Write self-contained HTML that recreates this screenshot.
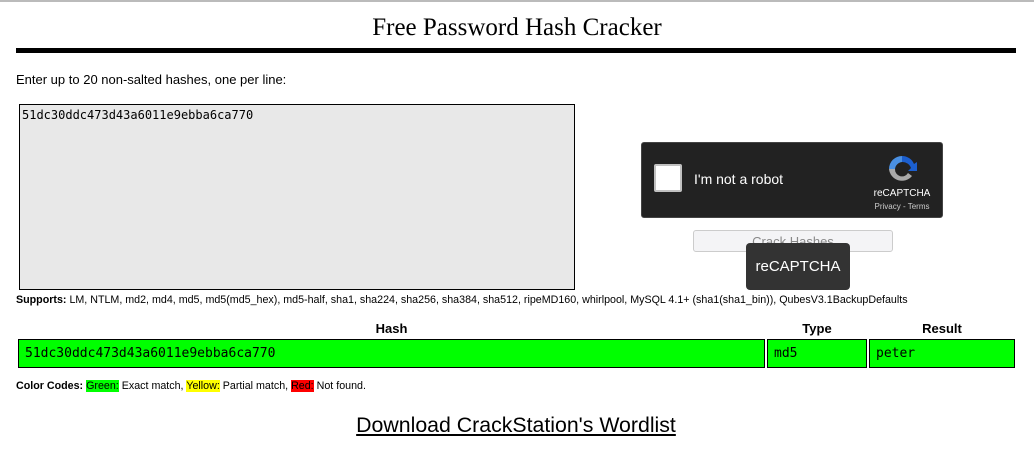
<!DOCTYPE html>
<html><head><style>
body{margin:0;width:1034px;height:452px;background:#fff;font-family:"Liberation Sans",sans-serif;position:relative;overflow:hidden}
.a{position:absolute}
.mono{font-family:"DejaVu Sans Mono","Liberation Mono",monospace}
.cell{position:absolute;background:#0f0;border:1px solid #000;top:339px;height:29px;box-sizing:border-box;font-size:13px;line-height:27px;padding-left:6px}
</style></head><body>
<div class="a" style="left:0;top:0;width:1034px;height:2px;background:#bbb"></div>
<div class="a" style="left:0;width:1034px;top:14px;text-align:center;font-family:'Liberation Serif',serif;font-size:25px">Free Password Hash Cracker</div>
<div class="a" style="left:16px;width:1000px;top:48px;height:5px;background:#000"></div>
<div class="a" style="left:16px;top:72px;font-size:13px">Enter up to 20 non-salted hashes, one per line:</div>
<div class="a mono" style="left:19px;top:104px;width:556px;height:186px;box-sizing:border-box;border:1px solid #000;background:#e8e8e8;font-size:12px;padding:3px 2px">51dc30ddc473d43a6011e9ebba6ca770</div>
<div class="a" style="left:641px;top:142px;width:302px;height:76px;background:#222;border:1px solid #444;border-radius:3px;box-sizing:border-box"></div>
<div class="a" style="left:654px;top:164px;width:28px;height:28px;background:#fff;border:2px solid #c1c1c1;box-sizing:border-box;border-radius:2px"></div>
<div class="a" style="left:694px;top:171px;color:#fff;font-size:14px">I'm not a robot</div>
<svg class="a" style="left:886px;top:153px" width="32" height="32" viewBox="0 0 32 32"><path d="M16 3a13 13 0 0 1 12 8l3-2v9h-9l3-3a9 9 0 0 0-9-6z" fill="#1c5fcf"/><path d="M3 16A13 13 0 0 1 16 3v6a8 8 0 0 0-7 7z" fill="#4a90e2"/><path d="M3 16h6a7 7 0 0 0 13 4l4 3A13 13 0 0 1 3 16z" fill="#aaa"/></svg>
<div class="a" style="left:870px;top:188px;width:64px;text-align:center;color:#fff;font-size:10px">reCAPTCHA</div>
<div class="a" style="left:870px;top:202px;width:64px;text-align:center;color:#ccc;font-size:8px">Privacy - Terms</div>
<div class="a" style="left:693px;top:230px;width:200px;height:22px;border:1px solid #ccc;border-radius:3px;background:#f4f4f6;box-sizing:border-box;text-align:center;color:#888;font-size:13px;line-height:22px">Crack Hashes</div>
<div class="a" style="left:746px;top:243px;width:104px;height:47px;background:#333;border-radius:4px;color:#fff;font-size:15px;text-align:center;line-height:47px">reCAPTCHA</div>
<div class="a" style="left:16px;top:294px;font-size:10.7px"><b>Supports:</b> LM, NTLM, md2, md4, md5, md5(md5_hex), md5-half, sha1, sha224, sha256, sha384, sha512, ripeMD160, whirlpool, MySQL 4.1+ (sha1(sha1_bin)), QubesV3.1BackupDefaults</div>
<div class="a" style="left:18px;width:747px;top:321px;text-align:center;font-weight:bold;font-size:13px">Hash</div>
<div class="a" style="left:767px;width:100px;top:321px;text-align:center;font-weight:bold;font-size:13px">Type</div>
<div class="a" style="left:869px;width:146px;top:321px;text-align:center;font-weight:bold;font-size:13px">Result</div>
<div class="cell mono" style="left:18px;width:747px">51dc30ddc473d43a6011e9ebba6ca770</div>
<div class="cell mono" style="left:767px;width:100px">md5</div>
<div class="cell mono" style="left:869px;width:146px">peter</div>
<div class="a" style="left:16px;top:380px;font-size:10.7px"><b>Color Codes:</b> <span style="background:#0f0">Green:</span> Exact match, <span style="background:#ff0">Yellow:</span> Partial match, <span style="background:#f00">Red:</span> Not found.</div>
<div class="a" style="left:0;width:1032px;top:413px;text-align:center;font-size:21.3px;text-decoration:underline">Download CrackStation's Wordlist</div>
</body></html>
